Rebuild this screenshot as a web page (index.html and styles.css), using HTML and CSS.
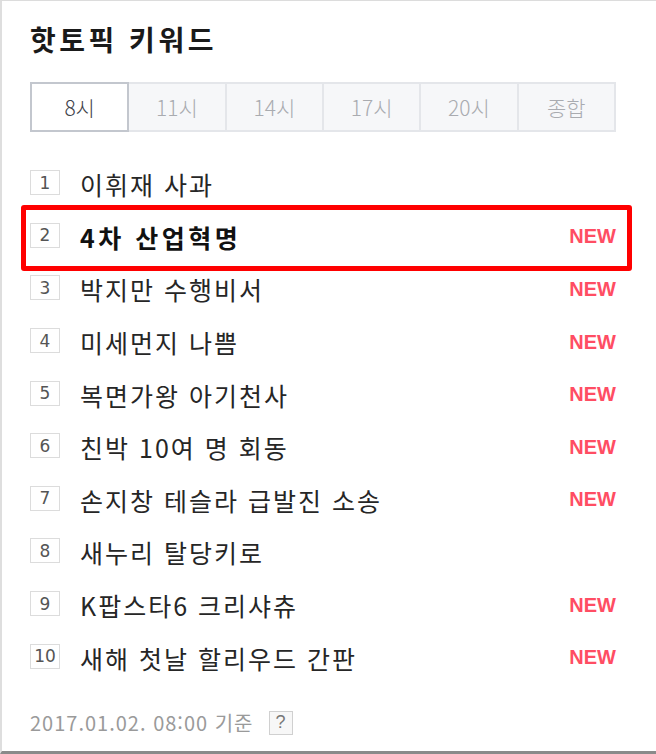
FILE: index.html
```html
<!DOCTYPE html>
<html lang="ko">
<head>
<meta charset="utf-8">
<title>핫토픽 키워드</title>
<link rel="stylesheet" href="styles.css">
</head>
<body>
<div class="panel">
  <h2 class="title">핫토픽 키워드</h2>
  <div class="tabs">
    <span class="tab active">8시</span>
    <span class="tab">11시</span>
    <span class="tab">14시</span>
    <span class="tab">17시</span>
    <span class="tab">20시</span>
    <span class="tab">종합</span>
  </div>
  <ol class="list">
    <li class="row"><span class="num">1</span><span class="kw">이휘재 사과</span></li>
    <li class="row highlight"><span class="num">2</span><span class="kw strong">4차 산업혁명</span><span class="new">NEW</span></li>
    <li class="row"><span class="num">3</span><span class="kw">박지만 수행비서</span><span class="new">NEW</span></li>
    <li class="row"><span class="num">4</span><span class="kw">미세먼지 나쁨</span><span class="new">NEW</span></li>
    <li class="row"><span class="num">5</span><span class="kw">복면가왕 아기천사</span><span class="new">NEW</span></li>
    <li class="row"><span class="num">6</span><span class="kw">친박 10여 명 회동</span><span class="new">NEW</span></li>
    <li class="row"><span class="num">7</span><span class="kw">손지창 테슬라 급발진 소송</span><span class="new">NEW</span></li>
    <li class="row"><span class="num">8</span><span class="kw">새누리 탈당키로</span></li>
    <li class="row"><span class="num">9</span><span class="kw">K팝스타6 크리샤츄</span><span class="new">NEW</span></li>
    <li class="row"><span class="num">10</span><span class="kw">새해 첫날 할리우드 간판</span><span class="new">NEW</span></li>
  </ol>
  <div class="footer"><span class="stamp">2017.01.02. 08:00 기준</span><span class="help">?</span></div>
</div>
</body>
</html>
```
FILE: styles.css
```css
* { box-sizing: border-box; }
html, body { margin: 0; padding: 0; background: #fff; }
body {
  font-family: "Noto Sans CJK KR", "Noto Sans", sans-serif;
  color: #222;
}
.panel {
  width: 656px;
  height: 754px;
  border-top: 1px solid #dcdcdc;
  border-left: 2px solid #dedede;
  border-bottom: 3px solid #8a8a8a;
  padding: 0 40px 0 28px;
  display: flex;
  flex-direction: column;
}
.title {
  margin: 21px 0 0;
  font-size: 28px;
  line-height: 34px;
  font-weight: 700;
  color: #1a1a1a;
  letter-spacing: 3.5px;
}
.tabs {
  margin-top: 26px;
  display: flex;
  height: 50px;
}
.tab {
  flex: 1;
  display: flex;
  align-items: center;
  justify-content: center;
  background: #f6f7f9;
  border: 2px solid #e4e6ea;
  margin-left: -2px;
  color: #a9abb0;
  font-size: 21px;
  font-weight: 300;
}
.tab:first-child { margin-left: 0; }
.tab.active {
  background: #fff;
  border-color: #c3c7ce;
  color: #3f434b;
  position: relative;
  z-index: 1;
}
.list {
  list-style: none;
  margin: 26px 0 0;
  padding: 0;
}
.row {
  height: 52.6px;
  display: flex;
  align-items: center;
}
.num {
  width: 30px;
  height: 25px;
  border: 1px solid #dcdcdc;
  display: flex;
  align-items: center;
  justify-content: center;
  font-family: "DejaVu Sans", sans-serif;
  font-size: 17px;
  color: #555;
  margin-top: -3px;
}
.kw {
  margin-left: 20px;
  font-size: 25px;
  letter-spacing: 2px;
  color: #262626;
  flex: 1;
  white-space: nowrap;
}
.kw.strong { font-weight: 700; color: #111; letter-spacing: 3.5px; }
.new {
  font-family: "Liberation Sans", Arial, sans-serif;
  font-weight: 700;
  font-size: 20px;
  color: #ff4d63;
}
.highlight { position: relative; }
.highlight::after {
  content: "";
  position: absolute;
  left: -9px;
  right: -16px;
  top: -6px;
  bottom: -8px;
  border: 5px solid #ff0000;
  border-radius: 3px;
}
.footer {
  margin-top: 26px;
  display: flex;
  align-items: center;
  height: 26px;
  font-size: 20px;
  letter-spacing: 1px;
  color: #9a9a9a;
}
.help {
  margin-left: 15px;
  width: 24px;
  height: 24px;
  border: 1px solid #d0d0d0;
  background: #f7f7f7;
  display: flex;
  align-items: center;
  justify-content: center;
  font-family: "Liberation Sans", Arial, sans-serif;
  font-size: 18px;
  letter-spacing: 0;
  color: #777;
}
```
